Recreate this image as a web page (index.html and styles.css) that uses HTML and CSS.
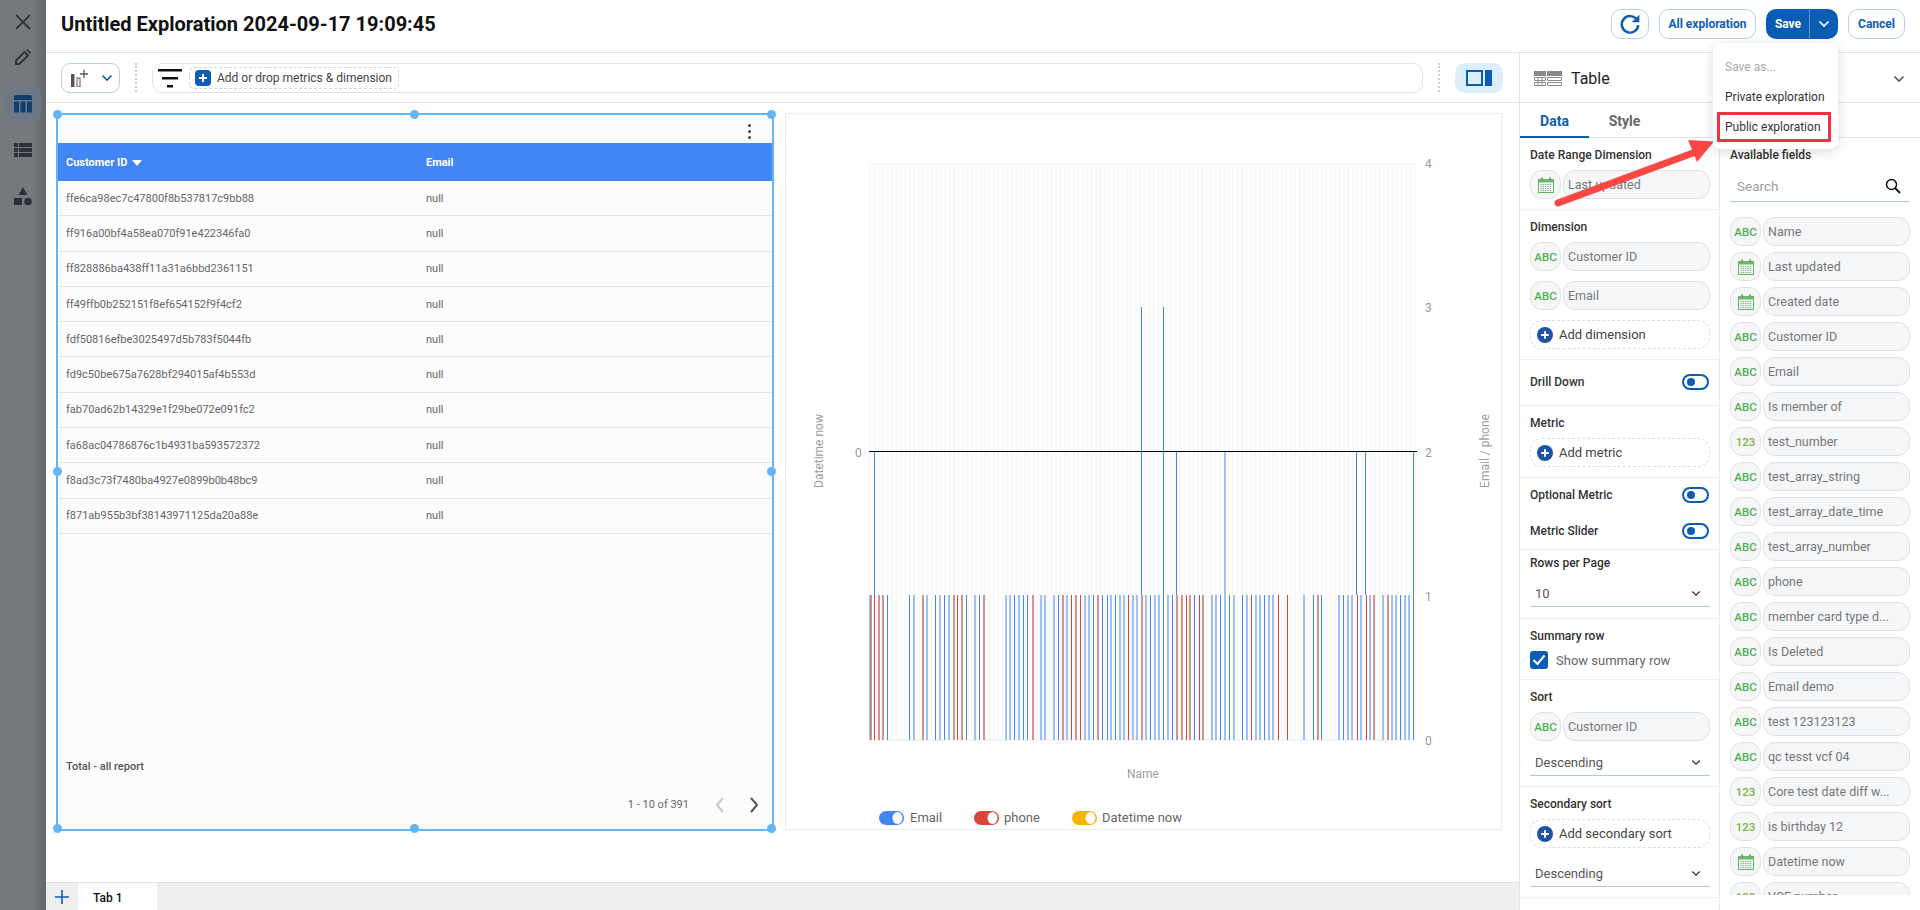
FILE: index.html
```html
<!DOCTYPE html>
<html lang="en">
<head>
<meta charset="UTF-8">
<title>Untitled Exploration</title>
<link rel="stylesheet" href="styles.css">
</head>
<body>
<svg class="defs" width="0" height="0">
  <symbol id="cal" viewBox="0 0 16 16">
    <rect x="0.5" y="2.5" width="15" height="13" fill="#f3f8ee" stroke="#5cb85c"/>
    <rect x="0" y="2" width="16" height="3.5" fill="#66bb6a"/>
    <rect x="3" y="0.5" width="2" height="3" fill="#8a9a5b"/>
    <rect x="11" y="0.5" width="2" height="3" fill="#8a9a5b"/>
    <path d="M2.5 7.5h11M2.5 9.5h11M2.5 11.5h11M2.5 13.5h11" stroke="#8fa3a8" stroke-dasharray="1.4 .9"/>
  </symbol>
  <symbol id="plus" viewBox="0 0 16 16">
    <circle cx="8" cy="8" r="8" fill="#1c54a3"/>
    <path d="M8 4.2v7.6M4.2 8h7.6" stroke="#fff" stroke-width="2"/>
  </symbol>
  <symbol id="chev" viewBox="0 0 12 8">
    <path d="M1.5 1.5 6 6l4.5-4.5" fill="none" stroke="currentColor" stroke-width="1.6"/>
  </symbol>
</svg>

<div class="app">
  <aside class="rail">
    <svg class="rail-icon" width="18" height="18" viewBox="0 0 18 18"><path d="M2 2l14 14M16 2 2 16" stroke="#33373b" stroke-width="1.8"/></svg>
    <svg class="rail-icon" width="18" height="18" viewBox="0 0 18 18"><path d="M2 16v-3.500L10.500 4 14 7.500 5.500 16z" fill="none" stroke="#2f3337" stroke-width="1.900"/><path d="M12.200 2.300 13.500 1 17 4.500 15.700 5.800z" fill="#2f3337"/></svg>
    <div class="rail-active">
      <svg width="18" height="18" viewBox="0 0 18 18" fill="#10406f"><path d="M2 0h14a2 2 0 0 1 2 2v3H0V2a2 2 0 0 1 2-2z"/><rect y="6.500" width="5" height="11"/><rect x="6.500" y="6.500" width="5" height="11"/><rect x="13" y="6.500" width="5" height="11"/></svg>
    </div>
    <svg class="rail-icon rail-list" width="18" height="18" viewBox="0 0 18 18" fill="#2b3237"><rect y="2" width="4" height="4"/><rect x="5" y="2" width="13" height="4"/><rect y="7" width="4" height="4"/><rect x="5" y="7" width="13" height="4"/><rect y="12" width="4" height="4"/><rect x="5" y="12" width="13" height="4"/></svg>
    <svg class="rail-icon rail-shapes" width="18" height="20" viewBox="0 0 18 20" fill="#2b3237"><path d="M9 1l4.500 8h-9z"/><rect y="12" width="8" height="7"/><circle cx="14" cy="15.500" r="3.800"/></svg>
  </aside>

  <div class="main">
    <header class="topbar">
      <h1 class="title">Untitled Exploration 2024-09-17 19:09:45</h1>
      <div class="top-actions">
        <button class="btn btn-refresh">
          <svg width="22" height="22" viewBox="0 0 20 20"><path d="M16.500 6.500A7.500 7.500 0 1 0 17.500 11" fill="none" stroke="#0d5cb6" stroke-width="2.200"/><path d="M18.500 1.500v7h-7z" fill="#0d5cb6"/></svg>
        </button>
        <button class="btn btn-all">All exploration</button>
        <div class="btn-save">
          <span class="save-label">Save</span>
          <span class="save-drop"><svg width="12" height="8"><use href="#chev"/></svg></span>
        </div>
        <button class="btn btn-cancel">Cancel</button>
      </div>
    </header>

    <div class="content">
      <section class="workspace">
        <div class="toolbar">
          <button class="chart-pick">
            <svg width="20" height="18" viewBox="0 0 20 18"><rect x="0" y="5" width="3.500" height="13" fill="#555"/><rect x="6" y="9" width="3" height="9" fill="none" stroke="#555"/><path d="M13 1v8M9 5h8" stroke="#555" stroke-width="1.300"/></svg>
            <svg class="pick-chev" width="12" height="8"><use href="#chev"/></svg>
          </button>
          <span class="dots"></span>
          <div class="filter-box">
            <svg class="filter-icon" width="24" height="20" viewBox="0 0 24 20" fill="#111"><rect width="24" height="2.500" y="0"/><rect x="4" y="8" width="16" height="2.500"/><rect x="9" y="16" width="6" height="2.500"/></svg>
            <div class="add-chip">
              <span class="chip-plus"></span>
              Add or drop metrics &amp; dimension
            </div>
          </div>
          <span class="dots dots-right"></span>
          <button class="panel-toggle">
            <svg width="26" height="16" viewBox="0 0 26 16"><rect x="1" y="1" width="15" height="14" fill="none" stroke="#0a5cb4" stroke-width="2"/><rect x="19" y="0" width="7" height="16" fill="#0a5cb4"/></svg>
          </button>
        </div>

        <div class="canvas">
          <div class="table-widget">
            <span class="handle h-tl"></span><span class="handle h-tc"></span><span class="handle h-tr"></span>
            <span class="handle h-ml"></span><span class="handle h-mr"></span>
            <span class="handle h-bl"></span><span class="handle h-bc"></span><span class="handle h-br"></span>
            <div class="table-top"><span class="kebab"><i></i><i></i><i></i></span></div>
            <div class="t-row t-head">
              <div>Customer ID <span class="sort-caret"></span></div>
              <div>Email</div>
            </div>
            <div class="t-body">
              <div class="t-row"><div>ffe6ca98ec7c47800f8b537817c9bb88</div><div>null</div></div>
              <div class="t-row"><div>ff916a00bf4a58ea070f91e422346fa0</div><div>null</div></div>
              <div class="t-row"><div>ff828886ba438ff11a31a6bbd2361151</div><div>null</div></div>
              <div class="t-row"><div>ff49ffb0b252151f8ef654152f9f4cf2</div><div>null</div></div>
              <div class="t-row"><div>fdf50816efbe3025497d5b783f5044fb</div><div>null</div></div>
              <div class="t-row"><div>fd9c50be675a7628bf294015af4b553d</div><div>null</div></div>
              <div class="t-row"><div>fab70ad62b14329e1f29be072e091fc2</div><div>null</div></div>
              <div class="t-row"><div>fa68ac04786876c1b4931ba593572372</div><div>null</div></div>
              <div class="t-row"><div>f8ad3c73f7480ba4927e0899b0b48bc9</div><div>null</div></div>
              <div class="t-row"><div>f871ab955b3bf38143971125da20a88e</div><div>null</div></div>
            </div>
            <div class="t-total">Total - all report</div>
            <div class="t-pager">
              <span>1 - 10 of 391</span>
              <svg class="pager-prev" width="10" height="16" viewBox="0 0 10 16"><path d="M8 1 2 8l6 7" fill="none" stroke="#c8c8c8" stroke-width="2"/></svg>
              <svg class="pager-next" width="10" height="16" viewBox="0 0 10 16"><path d="M2 1l6 7-6 7" fill="none" stroke="#555" stroke-width="2"/></svg>
            </div>
          </div>

          <div class="chart-widget">
            <svg class="chart" width="715" height="715" viewBox="786 114 715 715">
              <defs>
                <pattern id="stripes" x="869" y="0" width="4.430" height="10" patternUnits="userSpaceOnUse">
                  <rect width="2" height="10" fill="#f8f8f8"/>
                </pattern>
              </defs>
              <rect x="869" y="163" width="548" height="577" fill="url(#stripes)"/>
              <rect x="869" y="163" width="548" height="2" fill="#f8f8f8"/>
              <rect x="869" y="739" width="548" height="2" fill="#f4f4f4"/>

              <path class="bar-tall" d="M1141.500 307V595M1163.500 307V595M874.500 451V595M1176.500 451V595M1356.500 451V595M1365.500 451V595M1413.500 451V595"/>
              <path class="bar-tall-light" d="M1225 451V595"/>

              <path class="bar-light" d="M870 595v145M914 595v145M927 595v145M940 595v145M949 595v145M975 595v145M1006 595v145M1010 595v145M1019 595v145M1041 595v145M1045 595v145M1054 595v145M1067 595v145M1085 595v145M1089 595v145M1111 595v145M1120 595v145M1124 595v145M1133 595v145M1137 595v145M1146 595v145M1155 595v145M1159 595v145M1168 595v145M1212 595v145M1216 595v145M1225 595v145M1234 595v145M1247 595v145M1256 595v145M1260 595v145M1269 595v145M1273 595v145M1304 595v145M1339 595v145M1348 595v145M1352 595v145M1361 595v145M1370 595v145M1383 595v145M1392 595v145M1396 595v145M1405 595v145M1409 595v145"/>
              <path class="bar-blue" d="M887.500 595v145M909.500 595v145M935.500 595v145M944.500 595v145M966.500 595v145M979.500 595v145M1014.500 595v145M1023.500 595v145M1027.500 595v145M1058.500 595v145M1093.500 595v145M1102.500 595v145M1107.500 595v145M1115.500 595v145M1150.500 595v145M1163.500 595v145M1172.500 595v145M1194.500 595v145M1220.500 595v145M1229.500 595v145M1242.500 595v145M1264.500 595v145M1313.500 595v145M1321.500 595v145M1343.500 595v145M1400.500 595v145M1413.500 595v145"/>
              <path class="bar-pink" d="M871 595v145M879 595v145M883 595v145M923 595v145M954 595v145M962 595v145M984 595v145M1033 595v145M1063 595v145M1076 595v145M1098 595v145M1142 595v145M1177 595v145M1182 595v145M1190 595v145M1203 595v145M1318 595v145M1374 595v145M1388 595v145"/>
              <path class="bar-red" d="M874.500 595v145M957.500 595v145M1071.500 595v145M1080.500 595v145M1128.500 595v145M1186.500 595v145M1199.500 595v145M1251.500 595v145M1278.500 595v145M1287.500 595v145M1357.500 595v145M1366.500 595v145"/>

              <path class="zero-line" d="M869 451.500H1417"/>

              <text class="tick" x="1425" y="168">4</text>
              <text class="tick" x="1425" y="312">3</text>
              <text class="tick" x="1425" y="457">2</text>
              <text class="tick" x="1425" y="601">1</text>
              <text class="tick" x="1425" y="745">0</text>
              <text class="tick" x="855" y="457">0</text>
              <text class="axis" transform="translate(823 451) rotate(-90)" text-anchor="middle">Datetime now</text>
              <text class="axis" transform="translate(1489 451) rotate(-90)" text-anchor="middle">Email / phone</text>
              <text class="axis" x="1143" y="778" text-anchor="middle">Name</text>

              <rect x="879" y="811" width="25" height="14" rx="7" fill="#4285f4"/>
              <ellipse cx="897.500" cy="818" rx="5" ry="6" fill="#fff"/>
              <text class="legend" x="910" y="822">Email</text>
              <rect x="974" y="811" width="25" height="14" rx="7" fill="#db4437"/>
              <ellipse cx="992.500" cy="818" rx="5" ry="6" fill="#fff"/>
              <text class="legend" x="1004" y="822">phone</text>
              <rect x="1072" y="811" width="25" height="14" rx="7" fill="#f4b400"/>
              <ellipse cx="1090.500" cy="818" rx="5" ry="6" fill="#fff"/>
              <text class="legend" x="1102" y="822">Datetime now</text>
            </svg>
          </div>
        </div>

        <div class="tabbar">
          <span class="tab-add"><svg width="16" height="16" viewBox="0 0 16 16"><path d="M8 1v14M1 8h14" stroke="#0d5cb6" stroke-width="1.600"/></svg></span>
          <span class="tab">Tab 1</span>
        </div>
      </section>

      <aside class="panels">
        <div class="panel-head">
          <svg width="28" height="16" viewBox="0 0 28 16">
            <rect width="12" height="5" fill="#8a8a8a"/><rect x="13" width="15" height="5" fill="#8a8a8a"/>
            <path d="M.5 6.500h11v3h-11zM.5 11.500h11v3h-11zM13.500 6.500h14v3h-14zM13.500 11.500h14v3h-14z" fill="none" stroke="#8a8a8a"/>
            <path d="M4 6v9M8 6v9" stroke="#8a8a8a"/>
          </svg>
          <span class="panel-name">Table</span>
          <svg class="panel-chev" width="12" height="8"><use href="#chev"/></svg>
        </div>
        <div class="tabs">
          <span class="tab-data">Data</span>
          <span class="tab-style">Style</span>
        </div>
        <div class="columns">
          <div class="config">
            <div class="section">
              <div class="label">Date Range Dimension</div>
              <div class="field"><span class="ficon"><svg width="16" height="16"><use href="#cal"/></svg></span><span class="fname">Last updated</span></div>
            </div>
            <div class="section">
              <div class="label">Dimension</div>
              <div class="stack">
                <div class="field"><span class="ficon abc">ABC</span><span class="fname">Customer ID</span></div>
                <div class="field"><span class="ficon abc">ABC</span><span class="fname">Email</span></div>
                <div class="add-field"><svg width="16" height="16"><use href="#plus"/></svg>Add dimension</div>
              </div>
            </div>
            <div class="section section-switch">
              <div class="switch-row"><span class="label">Drill Down</span><span class="switch"></span></div>
            </div>
            <div class="section">
              <div class="label">Metric</div>
              <div class="add-field"><svg width="16" height="16"><use href="#plus"/></svg>Add metric</div>
            </div>
            <div class="section section-two">
              <div class="switch-row"><span class="label">Optional Metric</span><span class="switch"></span></div>
              <div class="switch-row"><span class="label">Metric Slider</span><span class="switch"></span></div>
            </div>
            <div class="section section-tight">
              <div class="label">Rows per Page</div>
              <div class="select"><span>10</span><svg width="10" height="7"><use href="#chev"/></svg></div>
            </div>
            <div class="section">
              <div class="label">Summary row</div>
              <div class="check-row">
                <span class="checkbox"><svg width="14" height="12" viewBox="0 0 14 12"><path d="M1.500 6l4 4 7-8.500" fill="none" stroke="#fff" stroke-width="2"/></svg></span>
                Show summary row
              </div>
            </div>
            <div class="section">
              <div class="label">Sort</div>
              <div class="field"><span class="ficon abc">ABC</span><span class="fname">Customer ID</span></div>
              <div class="select select-sort"><span>Descending</span><svg width="10" height="7"><use href="#chev"/></svg></div>
            </div>
            <div class="section">
              <div class="label">Secondary sort</div>
              <div class="add-field"><svg width="16" height="16"><use href="#plus"/></svg>Add secondary sort</div>
              <div class="select select-second"><span>Descending</span><svg width="10" height="7"><use href="#chev"/></svg></div>
            </div>
          </div>

          <div class="fields">
            <div class="label">Available fields</div>
            <div class="search">
              <span>Search</span>
              <svg width="16" height="16" viewBox="0 0 16 16"><circle cx="6.500" cy="6.500" r="5" fill="none" stroke="#111" stroke-width="1.500"/><path d="M10 10l5 5" stroke="#111" stroke-width="1.800"/></svg>
            </div>
            <div class="field-list">
              <div class="field"><span class="ficon abc">ABC</span><span class="fname">Name</span></div>
              <div class="field"><span class="ficon"><svg width="16" height="16"><use href="#cal"/></svg></span><span class="fname">Last updated</span></div>
              <div class="field"><span class="ficon"><svg width="16" height="16"><use href="#cal"/></svg></span><span class="fname">Created date</span></div>
              <div class="field"><span class="ficon abc">ABC</span><span class="fname">Customer ID</span></div>
              <div class="field"><span class="ficon abc">ABC</span><span class="fname">Email</span></div>
              <div class="field"><span class="ficon abc">ABC</span><span class="fname">Is member of</span></div>
              <div class="field"><span class="ficon num">123</span><span class="fname">test_number</span></div>
              <div class="field"><span class="ficon abc">ABC</span><span class="fname">test_array_string</span></div>
              <div class="field"><span class="ficon abc">ABC</span><span class="fname">test_array_date_time</span></div>
              <div class="field"><span class="ficon abc">ABC</span><span class="fname">test_array_number</span></div>
              <div class="field"><span class="ficon abc">ABC</span><span class="fname">phone</span></div>
              <div class="field"><span class="ficon abc">ABC</span><span class="fname">member card type d...</span></div>
              <div class="field"><span class="ficon abc">ABC</span><span class="fname">Is Deleted</span></div>
              <div class="field"><span class="ficon abc">ABC</span><span class="fname">Email demo</span></div>
              <div class="field"><span class="ficon abc">ABC</span><span class="fname">test 123123123</span></div>
              <div class="field"><span class="ficon abc">ABC</span><span class="fname">qc tesst vcf 04</span></div>
              <div class="field"><span class="ficon num">123</span><span class="fname">Core test date diff w...</span></div>
              <div class="field"><span class="ficon num">123</span><span class="fname">is birthday 12</span></div>
              <div class="field"><span class="ficon"><svg width="16" height="16"><use href="#cal"/></svg></span><span class="fname">Datetime now</span></div>
              <div class="field"><span class="ficon num">123</span><span class="fname">VCF number</span></div>
            </div>
          </div>
        </div>
      </aside>
    </div>
  </div>
</div>

<div class="save-menu">
  <div class="menu-item menu-muted">Save as...</div>
  <div class="menu-item">Private exploration</div>
  <div class="menu-item menu-marked">Public exploration</div>
</div>

<svg class="callout" width="170" height="80" viewBox="1550 130 170 80">
  <path d="M1558 203 1693 153" stroke="#fb4646" stroke-width="7" stroke-linecap="round" fill="none"/>
  <path d="M1714 141.500 1688 140 1697 162z" fill="#fb4646"/>
</svg>
</body>
</html>
```

FILE: styles.css
```css
* {
  box-sizing: border-box;
}
body {
  margin: 0;
  height: 910px;
  overflow: hidden;
  position: relative;
  font-family: Roboto, 'Noto Sans', sans-serif;
  font-size: 12px;
  color: #333;
  background: #fff;
}
button {
  font-family: inherit;
  cursor: pointer;
}
.defs {
  position: absolute;
}
.app {
  display: flex;
  height: 910px;
}

/* left rail, dimmed */
.rail {
  width: 46px;
  flex: none;
  display: flex;
  flex-direction: column;
  align-items: center;
  padding-top: 13px;
  background: linear-gradient(90deg, #75797e 0, #75797e 32px, #63676c 46px);
}
.rail-icon {
  display: block;
}
.rail-icon + .rail-icon {
  margin-top: 17px;
}
.rail-active {
  width: 36px;
  height: 36px;
  margin-top: 20px;
  border-radius: 9px;
  background: #6d7886;
  display: flex;
  align-items: center;
  justify-content: center;
}
.rail-list {
  margin-top: 19px;
}
.rail-icon + .rail-shapes {
  margin-top: 27px;
}

.main {
  flex: 1;
  min-width: 0;
  display: flex;
  flex-direction: column;
}
.topbar {
  height: 53px;
  flex: none;
  display: flex;
  justify-content: space-between;
  padding: 9px 15px 0 15px;
  border-bottom: 1px solid #e3e3e3;
}
.title {
  margin: 0;
  font-size: 20px;
  line-height: 30px;
  font-weight: 700;
  color: #111;
}
.top-actions {
  display: flex;
  gap: 10px;
  height: 30px;
}
.btn {
  height: 30px;
  padding: 0;
  background: #fff;
  border: 1px solid #b9d1e8;
  border-radius: 10px;
  color: #0d5cb6;
  font-size: 12px;
  font-weight: 700;
}
.btn-refresh {
  width: 38px;
  display: flex;
  align-items: center;
  justify-content: center;
}
.btn-all {
  width: 97px;
}
.btn-cancel {
  width: 57px;
}
.btn-save {
  width: 72px;
  height: 30px;
  display: flex;
  align-items: center;
  color: #fff;
  font-weight: 700;
  background: #0a5cb4;
  border-radius: 10px;
}
.save-label {
  width: 43px;
  text-align: center;
  padding-left: 1px;
}
.save-drop {
  flex: 1;
  height: 100%;
  display: flex;
  align-items: center;
  justify-content: center;
  border-left: 1px solid #5b93cf;
}

.content {
  flex: 1;
  min-height: 0;
  display: flex;
}
.workspace {
  width: 1473px;
  flex: none;
  display: flex;
  flex-direction: column;
}
.toolbar {
  height: 50px;
  flex: none;
  display: flex;
  align-items: flex-start;
  padding: 10px 15px 0;
  border-bottom: 1px solid #e3e3e3;
}
.chart-pick {
  width: 59px;
  height: 30px;
  display: flex;
  align-items: center;
  justify-content: space-between;
  padding: 0 6px 0 9px;
  background: #fff;
  border: 1px solid #b9d1e8;
  border-radius: 9px;
}
.pick-chev {
  color: #0d5cb6;
}
.dots {
  width: 0;
  height: 29px;
  margin: 0 15px;
  border-left: 2px dotted #cfcfcf;
}
.dots-right {
  margin: 0 15px;
}
.filter-box {
  width: 1271px;
  height: 30px;
  display: flex;
  align-items: center;
  padding-left: 5px;
  border: 1px solid #e5e5e5;
  border-radius: 10px;
}
.filter-icon {
  margin-top: 2px;
}
.add-chip {
  width: 210px;
  height: 22px;
  margin-left: 7px;
  display: flex;
  align-items: center;
  gap: 6px;
  padding-left: 5px;
  font-size: 12px;
  color: #444;
  border: 1px dashed #d5d5d5;
  border-radius: 5px;
}
.chip-plus {
  width: 16px;
  height: 16px;
  border-radius: 4px;
  background: #0a5cb4;
  position: relative;
}
.chip-plus::before,
.chip-plus::after {
  content: "";
  position: absolute;
  background: #fff;
}
.chip-plus::before {
  left: 4px;
  top: 7px;
  width: 8px;
  height: 2px;
}
.chip-plus::after {
  left: 7px;
  top: 4px;
  width: 2px;
  height: 8px;
}
.panel-toggle {
  width: 48px;
  height: 30px;
  padding: 0;
  border: 0;
  border-radius: 10px;
  background: #dcedfc;
  display: flex;
  align-items: center;
  justify-content: center;
}

.canvas {
  flex: 1;
  min-height: 0;
  display: flex;
  padding: 10px 0 0 10px;
  gap: 11px;
}
.table-widget {
  width: 718px;
  height: 718px;
  position: relative;
  display: flex;
  flex-direction: column;
  font-size: 11px;
  background: #fcfcfc;
  border: 2px solid #64b5f6;
}
.handle {
  position: absolute;
  width: 9px;
  height: 9px;
  margin: -5px 0 0 -5px;
  border-radius: 50%;
  background: #64b5f6;
  z-index: 2;
}
.h-tl { left: 0; top: 0; }
.h-tc { left: 50%; top: 0; }
.h-tr { left: 100%; top: 0; }
.h-ml { left: 0; top: 50%; }
.h-mr { left: 100%; top: 50%; }
.h-bl { left: 0; top: 100%; }
.h-bc { left: 50%; top: 100%; }
.h-br { left: 100%; top: 100%; }
.table-top {
  height: 28px;
  flex: none;
  display: flex;
  justify-content: flex-end;
  padding: 9px 21px 0 0;
}
.kebab {
  display: flex;
  flex-direction: column;
  gap: 3px;
}
.kebab i {
  width: 3px;
  height: 3px;
  border-radius: 50%;
  background: #444;
}
.t-row {
  height: 35.3px;
  display: grid;
  grid-template-columns: 352px 1fr;
  align-items: center;
  padding-left: 8px;
  color: #666;
  border-bottom: 1px solid #e6e6e6;
}
.t-row > div + div {
  padding-left: 8px;
}
.t-head {
  height: 38px;
  flex: none;
  background: #4285f4;
  color: #fff;
  font-weight: 700;
  border: 0;
}
.sort-caret {
  display: inline-block;
  width: 0;
  height: 0;
  margin-left: 2px;
  border-left: 5px solid transparent;
  border-right: 5px solid transparent;
  border-top: 6px solid #fff;
}
.t-body {
  flex: 1;
}
.t-total {
  height: 30px;
  flex: none;
  line-height: 30px;
  padding-left: 8px;
  font-weight: 500;
  color: #555;
}
.t-pager {
  height: 47px;
  flex: none;
  display: flex;
  align-items: center;
  justify-content: flex-end;
  padding: 0 13px 2px 0;
  color: #666;
}
.pager-prev {
  margin-left: 26px;
}
.pager-next {
  margin-left: 24px;
}

.chart-widget {
  width: 717px;
  height: 717px;
  border: 1px solid #e4edf0;
  background: #fff;
}
.chart {
  display: block;
}
.bar-tall,
.bar-blue {
  stroke: #4285f4;
  stroke-width: 1;
  fill: none;
}
.bar-tall-light,
.bar-light {
  stroke: #4285f4;
  stroke-width: 2;
  stroke-opacity: .5;
  fill: none;
}
.bar-pink {
  stroke: #c8706a;
  stroke-width: 2;
  stroke-opacity: .75;
  fill: none;
}
.bar-red {
  stroke: #db4437;
  stroke-width: 1;
  fill: none;
}
.zero-line {
  stroke: #000;
  stroke-width: 1;
}
.tick {
  font-size: 12px;
  fill: #999;
}
.axis {
  font-size: 12px;
  fill: #9e9e9e;
}
.legend {
  font-size: 13px;
  fill: #666;
}

.tabbar {
  flex: none;
  height: 28px;
  display: flex;
  background: #efefef;
  border-top: 1px solid #e3e3e3;
}
.tab-add {
  width: 32px;
  display: flex;
  align-items: center;
  justify-content: center;
}
.tab {
  width: 79px;
  padding-left: 15px;
  line-height: 31px;
  font-weight: 500;
  color: #111;
  background: #fff;
}

/* right panels */
.panels {
  flex: 1;
  min-width: 0;
  display: flex;
  flex-direction: column;
  border-left: 1px solid #e3e3e3;
}
.panel-head {
  height: 50px;
  flex: none;
  display: flex;
  align-items: center;
  padding: 2px 15px 0 14px;
  border-bottom: 1px solid #e3e3e3;
}
.panel-name {
  margin-left: 9px;
  flex: 1;
  font-size: 16px;
  color: #222;
}
.panel-chev {
  color: #555;
}
.tabs {
  height: 35px;
  flex: none;
  display: flex;
  font-size: 14px;
  font-weight: 700;
  border-bottom: 1px solid #e3e3e3;
}
.tabs span {
  width: 69px;
  line-height: 36px;
  text-align: center;
}
.tab-data {
  color: #0d5cb6;
  border-bottom: 2px solid #0d5cb6;
  height: 35px;
}
.tab-style {
  color: #666;
  margin-left: 1px;
}
.columns {
  flex: 1;
  min-height: 0;
  display: flex;
}
.config {
  width: 200px;
  flex: none;
  border-right: 1px solid #e8e8e8;
}
.section {
  padding: 9px 9px 10px 10px;
  border-bottom: 1px solid #eeeeee;
}
.section-switch {
  height: 46px;
  padding-top: 14px;
}
.section-two {
  height: 72px;
}
.section-tight {
  padding-top: 5px;
  padding-bottom: 11px;
}
.label {
  display: block;
  height: 16px;
  line-height: 16px;
  margin-bottom: 7px;
  font-weight: 500;
  color: #333;
}
.switch-row {
  display: flex;
  justify-content: space-between;
  align-items: flex-start;
}
.switch-row + .switch-row {
  margin-top: 20px;
}
.switch-row .label {
  margin-bottom: 0;
}
.switch {
  width: 27px;
  height: 16px;
  margin-right: 1px;
  position: relative;
  border: 2px solid #0a5cb4;
  border-radius: 8px;
  background: #fff;
}
.switch::before {
  content: "";
  position: absolute;
  left: 3px;
  top: 2px;
  width: 8px;
  height: 8px;
  border-radius: 50%;
  background: #0a5cb4;
}
.stack {
  display: flex;
  flex-direction: column;
  gap: 10px;
}
.field {
  height: 29px;
  display: flex;
  gap: 2px;
  flex: none;
}
.ficon {
  width: 31px;
  display: flex;
  align-items: center;
  justify-content: center;
  background: #f5f6f8;
  border: 1px solid #dfe2e5;
  border-radius: 12px;
  font-weight: 500;
  font-size: 11.5px;
}
.abc,
.num {
  color: #4caf50;
}
.num {
  color: #7cb342;
}
.fname {
  width: 147px;
  padding-left: 4px;
  line-height: 27px;
  font-size: 12.5px;
  color: #777;
  background: #f5f6f8;
  border: 1px solid #dfe2e5;
  border-radius: 12px;
}
.add-field {
  width: 180px;
  height: 29px;
  display: flex;
  align-items: center;
  gap: 6px;
  padding-left: 6px;
  font-size: 13px;
  color: #444;
  border: 1px dashed #dcdfe2;
  border-radius: 12px;
}
.select {
  width: 180px;
  height: 29px;
  margin-top: 7px;
  display: flex;
  justify-content: space-between;
  align-items: center;
  padding: 2px 9px 0 5px;
  font-size: 13px;
  color: #555;
  border-bottom: 1px solid #b3c7e0;
}
.select svg {
  color: #333;
}
.select-sort {
  margin-top: 6px;
}
.select-second {
  margin-top: 10px;
}
.check-row {
  display: flex;
  align-items: center;
  gap: 8px;
  font-size: 13px;
  color: #666;
}
.checkbox {
  width: 18px;
  height: 18px;
  display: flex;
  align-items: center;
  justify-content: center;
  border-radius: 3px;
  background: #0a5cb4;
}
.fields {
  flex: 1;
  min-width: 0;
  padding: 9px 0 0 10px;
}
.search {
  width: 180px;
  height: 32px;
  display: flex;
  justify-content: space-between;
  align-items: center;
  padding: 0 9px 0 7px;
  font-size: 13.5px;
  color: #9e9e9e;
  border-bottom: 1px solid #b3c7e0;
}
.field-list {
  height: 678px;
  margin-top: 15px;
  display: flex;
  flex-direction: column;
  gap: 6px;
  overflow: hidden;
}

/* save dropdown */
.save-menu {
  position: absolute;
  left: 1713px;
  top: 43px;
  width: 125px;
  height: 106px;
  padding-top: 9px;
  background: #fff;
  border-radius: 8px;
  box-shadow: 0 3px 12px rgba(0, 0, 0, .14);
  z-index: 5;
}
.menu-item {
  height: 30px;
  line-height: 30px;
  padding-left: 12px;
  color: #333;
}
.menu-muted {
  color: #aaa;
}
.menu-marked {
  width: 114px;
  margin-left: 4px;
  padding-left: 5px;
  line-height: 24px;
  border: 3px solid #ee3344;
}
.callout {
  position: absolute;
  left: 1550px;
  top: 130px;
  z-index: 4;
}
```
